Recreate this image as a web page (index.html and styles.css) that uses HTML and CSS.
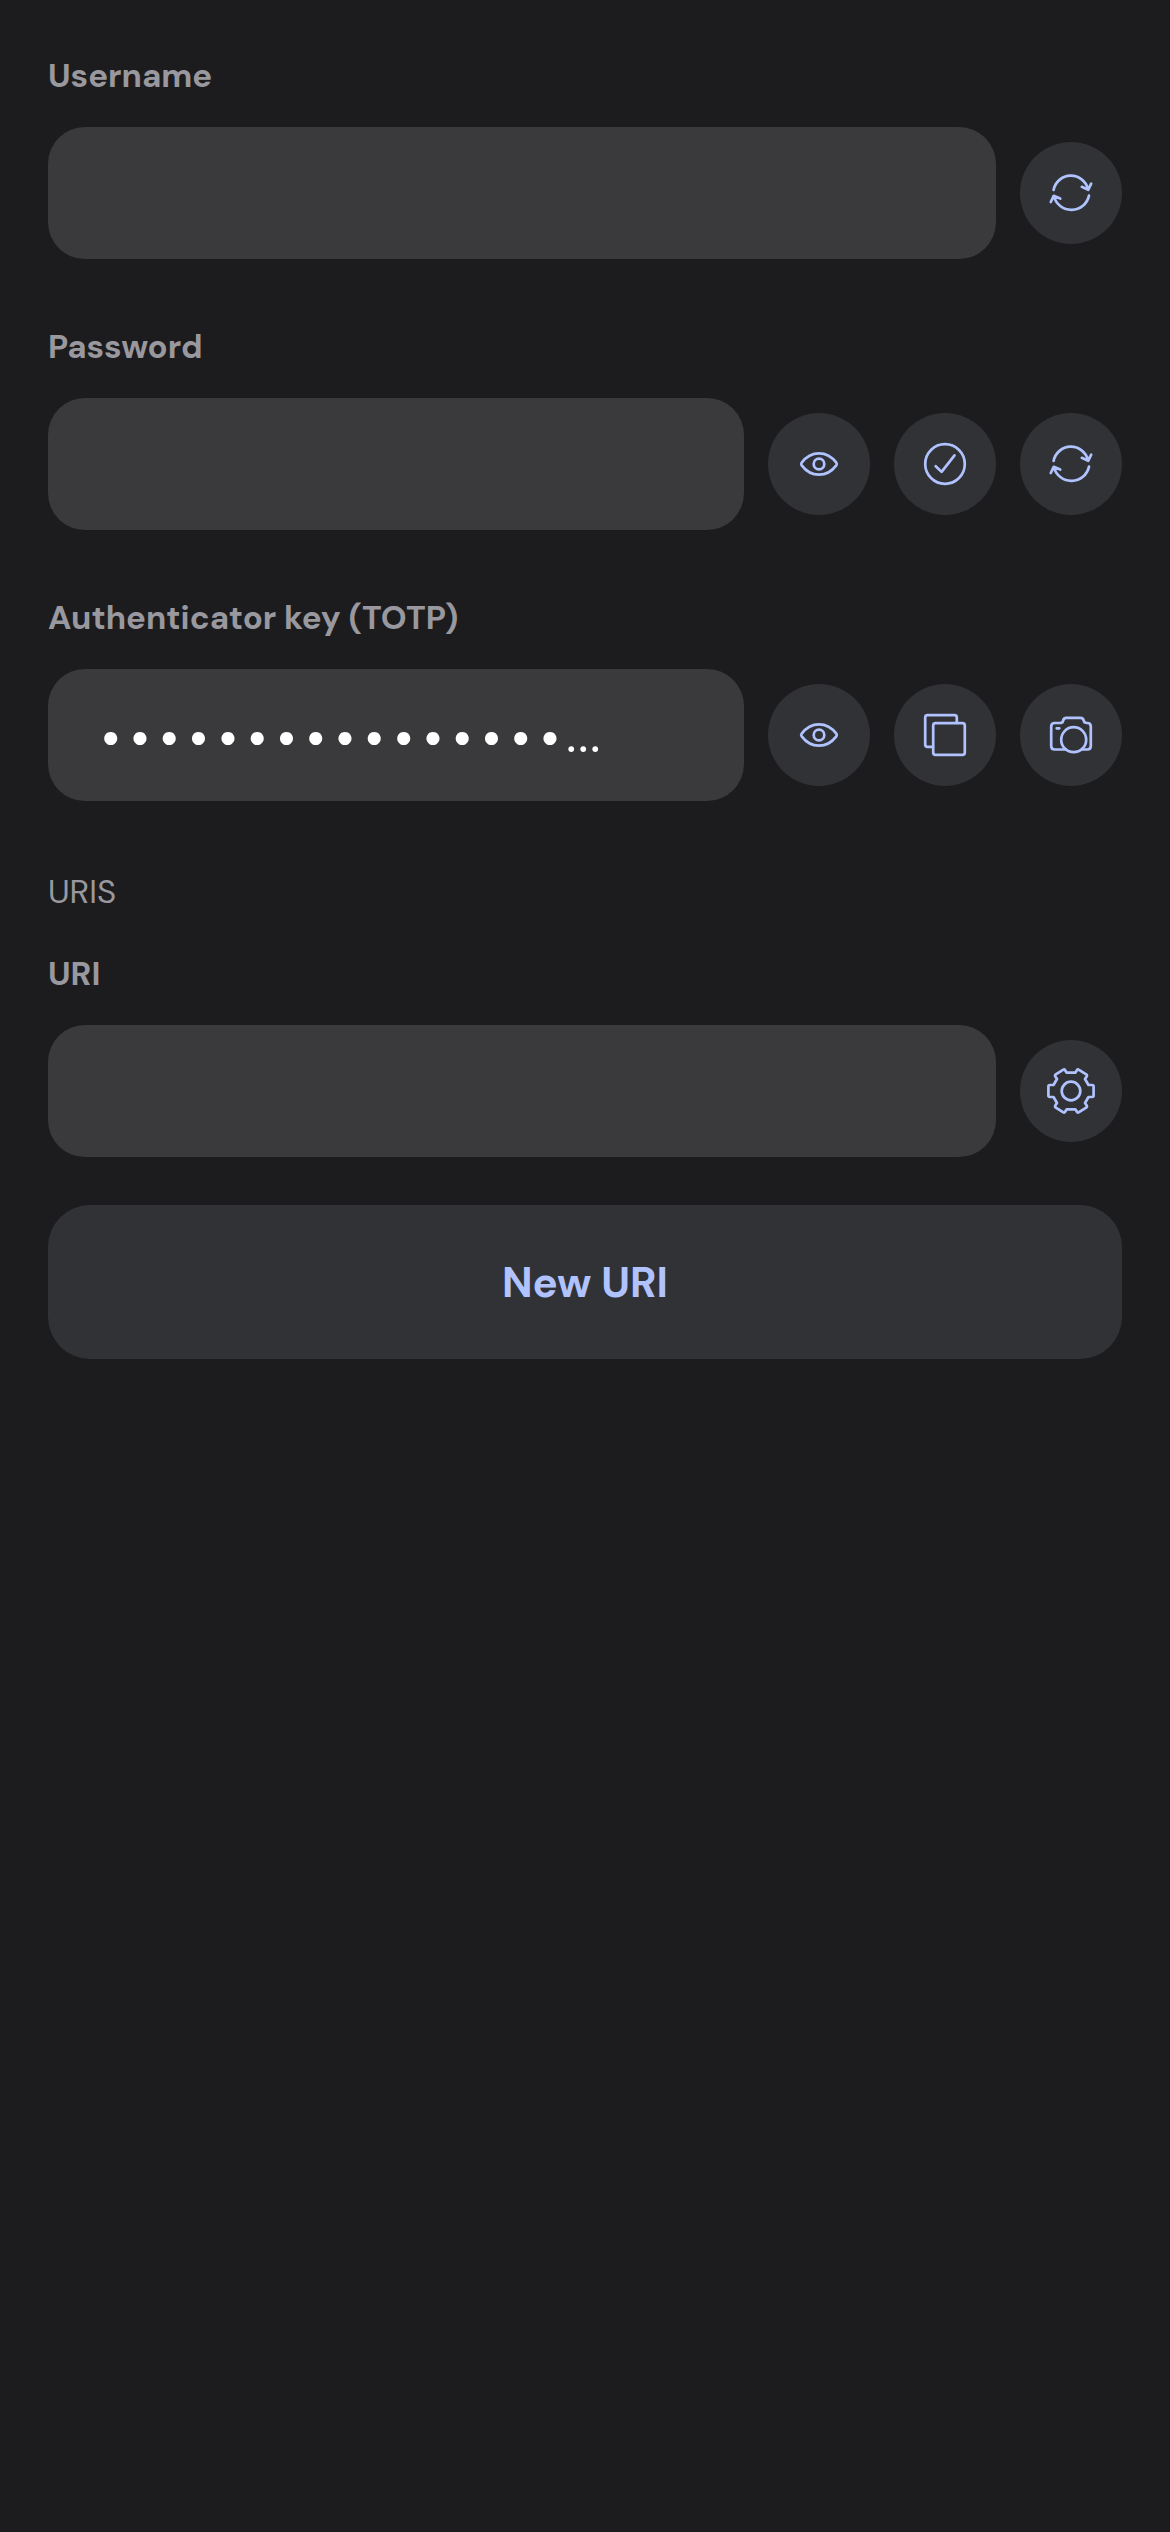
FILE: index.html
```html
<!DOCTYPE html>
<html lang="en">
<head>
<meta charset="utf-8">
<title>Login item</title>
<link rel="stylesheet" href="styles.css">
</head>
<body>
<svg class="sprite" aria-hidden="true">
  <symbol id="sync" viewBox="-24 -24 48 48">
    <path d="M-17.4-3A17.6 17.6 0 0 1 17-3.8M10.8-6.2 17.2-3.2 20.2-9.4M18 2.6A18 18 0 0 1-17 3.5M-20.2 9-17.3 2.8-10.8 5.6"/>
  </symbol>
  <symbol id="eye" viewBox="-24 -24 48 48">
    <path d="M-17.3-1.4C-8-13.8 8-13.8 17.3-1.4Q18.3 0 17.3 1.4C8 13.8-8 13.8-17.3 1.4Q-18.3 0-17.3-1.4Z"/>
    <circle r="5.3"/>
  </symbol>
  <symbol id="check" viewBox="-24 -24 48 48">
    <circle r="19.8"/>
    <path d="M-9.3 2.2-3.4 7.9 9.5-8.6"/>
  </symbol>
  <symbol id="copy" viewBox="-24 -24 48 48">
    <rect x="-11.8" y="-11.8" width="31.6" height="31.6" rx="2.4"/>
    <path d="M11.8-12V-17.4Q11.8-19.8 9.4-19.8H-17.4Q-19.8-19.8-19.8-17.4V9.4Q-19.8 11.8-17.4 11.8H-12"/>
  </symbol>
  <symbol id="camera" viewBox="-24 -24 48 48">
    <path d="M-5.5 14.5H-16.3Q-19.8 14.5-19.8 11V-8.5Q-19.8-12-16.3-12H-11Q-8.2-12-7.9-14.2-7.5-17.2-4.5-17.2H9.5Q12.2-17.2 12.8-14.2 13.2-12 15.8-12H16.3Q19.8-12 19.8-8.5V11Q19.8 14.5 16.3 14.5H11M-14.3-6.7H-11.7"/>
    <circle cx="2.7" cy="4.7" r="12.5"/>
  </symbol>
  <symbol id="gear" viewBox="-26 -26 52 52">
    <path d="M-21.2-6H-17.5L-14-12-15.7-14.6Q-16.4-15.8-15.2-16.6L-8-21.2Q-6.6-22-5.9-20.8L-4.3-18.3H4.3L5.9-20.8Q6.6-22 8-21.2L15.2-16.6Q16.4-15.8 15.7-14.6L14-12 17.5-6H21.2Q22.6-6 22.6-4.6V4.6Q22.6 6 21.2 6H17.5L14 12 15.7 14.6Q16.4 15.8 15.2 16.6L8 21.2Q6.6 22 5.9 20.8L4.3 18.3H-4.3L-5.9 20.8Q-6.6 22-8 21.2L-15.2 16.6Q-16.4 15.8-15.7 14.6L-14 12-17.5 6H-21.2Q-22.6 6-22.6 4.6V-4.6Q-22.6-6-21.2-6Z"/>
    <circle r="9.3"/>
  </symbol>
</svg>
<main class="form">
  <section class="group">
    <div class="label">Username</div>
    <div class="row">
      <div class="field"></div>
      <div class="action"><svg class="icon"><use href="#sync"/></svg></div>
    </div>
  </section>
  <section class="group">
    <div class="label">Password</div>
    <div class="row">
      <div class="field"></div>
      <div class="action"><svg class="icon"><use href="#eye"/></svg></div>
      <div class="action"><svg class="icon"><use href="#check"/></svg></div>
      <div class="action"><svg class="icon"><use href="#sync"/></svg></div>
    </div>
  </section>
  <section class="group">
    <div class="label">Authenticator key (TOTP)</div>
    <div class="row">
      <div class="field"><span class="dots">••••••••••••••••</span><span class="ellipsis">...</span></div>
      <div class="action"><svg class="icon"><use href="#eye"/></svg></div>
      <div class="action"><svg class="icon"><use href="#copy"/></svg></div>
      <div class="action"><svg class="icon"><use href="#camera"/></svg></div>
    </div>
  </section>
  <h2 class="heading">URIS</h2>
  <section class="group uri-group">
    <div class="label">URI</div>
    <div class="row">
      <div class="field"></div>
      <div class="action"><svg class="icon large"><use href="#gear"/></svg></div>
    </div>
  </section>
  <div class="new-uri">New URI</div>
</main>
</body>
</html>
```
FILE: styles.css
```css
* { box-sizing: border-box; }
body {
  margin: 0;
  min-height: 2532px;
  background: #1c1c1e;
  font-family: "DM Sans", Inter, sans-serif;
  font-optical-sizing: none;
}
.sprite { display: none; }
.form { padding: 56px 48px 0; }
.group { margin-bottom: 68px; }
.label {
  margin-bottom: 31px;
  color: #99989e;
  font-size: 33px;
  font-weight: 700;
  line-height: 40px;
}
.row { display: flex; align-items: center; gap: 24px; }
.field {
  display: flex;
  align-items: center;
  flex: 1;
  height: 132px;
  padding-left: 53px;
  border-radius: 37px;
  background: #3a3a3c;
  color: #fff;
  line-height: 1;
  white-space: nowrap;
}
.dots { padding-top: 8px; font-size: 54px; letter-spacing: 9.85px; }
.ellipsis { margin-left: -3.5px; font-size: 50px; letter-spacing: 2.1px; }
.action {
  display: flex;
  align-items: center;
  justify-content: center;
  width: 102px;
  height: 102px;
  border-radius: 50%;
  background: #313235;
}
.icon {
  width: 48px;
  height: 48px;
  fill: none;
  stroke: #b0c3ff;
  stroke-width: 2.7;
  stroke-linecap: round;
  stroke-linejoin: round;
}
.icon.large { width: 52px; height: 52px; }
.heading {
  margin: 71px 0 42px;
  color: #99989e;
  font-size: 33px;
  font-weight: 400;
  line-height: 40px;
}
.uri-group { margin-bottom: 48px; }
.new-uri {
  display: flex;
  align-items: center;
  justify-content: center;
  height: 154px;
  border-radius: 42px;
  background: #313235;
  color: #b0c3ff;
  font-size: 42px;
  font-weight: 700;
}
```
